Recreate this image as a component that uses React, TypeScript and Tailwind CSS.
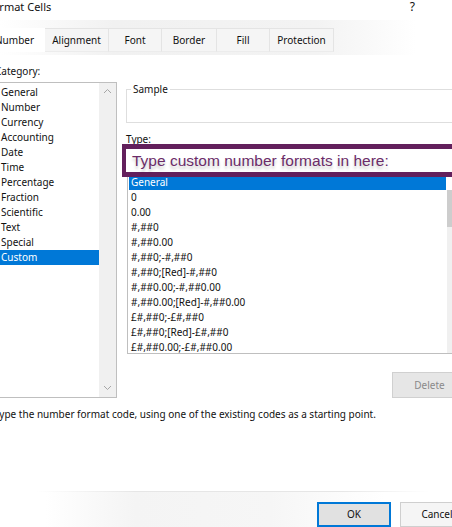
import React from 'react';

const categories = ['General', 'Number', 'Currency', 'Accounting', 'Date', 'Time', 'Percentage', 'Fraction', 'Scientific', 'Text', 'Special', 'Custom'];

const formats = [
    'General',
    '0',
    '0.00',
    '#,##0',
    '#,##0.00',
    '#,##0;-#,##0',
    '#,##0;[Red]-#,##0',
    '#,##0.00;-#,##0.00',
    '#,##0.00;[Red]-#,##0.00',
    '£#,##0;-£#,##0',
    '£#,##0;[Red]-£#,##0',
    '£#,##0.00;-£#,##0.00',
];

const tabs = [
    { label: 'Alignment', width: 'w-[64px]' },
    { label: 'Font', width: 'w-[53px]' },
    { label: 'Border', width: 'w-[55px]' },
    { label: 'Fill', width: 'w-[53px]' },
    { label: 'Protection', width: 'w-[64px]' },
];

const Chevron: React.FC<{ up?: boolean }> = ({ up }) => (
    <svg width="9" height="6" viewBox="0 0 9 6" className="text-[#a6a6a6]">
        <path d={up ? 'M1 5 L4.5 1.5 L8 5' : 'M1 1 L4.5 4.5 L8 1'} fill="none" stroke="currentColor" strokeWidth="1" />
    </svg>
);

const App: React.FC = () => {
    return (
        <div className="w-[452px] h-[527px] overflow-hidden bg-white text-[10px] text-[#111111] font-['Noto_Sans',sans-serif]">
            {/* title bar */}
            <div className="flex h-[13px] items-center justify-between pr-[37px]">
                <span className="ml-[-13px] text-[11px] leading-[13px] whitespace-nowrap">Format Cells</span>
                <span className="text-[12px] leading-[13px]">?</span>
            </div>

            {/* tabs */}
            <div className="mt-[7px] pt-[8px] pb-[3px] bg-[linear-gradient(to_right,#ffffff_0%,#f1f1f1_25%,#f3f3f3_70%,#ffffff_92%)]">
                <div className="flex h-[24px]">
                    <div className="ml-[-13px] w-[58px] pl-[8px] flex items-center bg-white whitespace-nowrap">Number</div>
                    {tabs.map((t) => (
                        <div
                            key={t.label}
                            className={`${t.width} flex items-center justify-center bg-[#f5f5f5] border-t border-r border-[#e4e4e4] border-b border-b-[#ececec]`}
                        >
                            {t.label}
                        </div>
                    ))}
                </div>
            </div>

            {/* body */}
            <div className="flex items-start">
                <div className="w-[117px] shrink-0 pt-[9px]">
                    <div className="ml-[-5px] h-[14px] leading-[14px]">Category:</div>
                    <div className="mt-[4px] ml-[-2px] h-[316px] border border-[#bfbfbf] flex">
                        <div className="flex-1 pt-[2px] pl-[1px]">
                            {categories.map((c) => (
                                <div
                                    key={c}
                                    className={`h-[15px] leading-[15px] pl-[1px] ${c === 'Custom' ? 'bg-[#0078d7] text-white' : ''}`}
                                >
                                    {c}
                                </div>
                            ))}
                        </div>
                        <div className="w-[17px] bg-[#f0f0f0] flex flex-col items-center justify-between pt-[5px] pb-[6px]">
                            <Chevron up />
                            <Chevron />
                        </div>
                    </div>
                </div>

                <div className="ml-[5px] w-[343px] shrink-0 pt-[27px]">
                    <fieldset className="ml-[4px] w-[330px] h-[41px] border border-[#dedede]">
                        <legend className="ml-[4px] px-[2px] leading-[14px]">Sample</legend>
                    </fieldset>

                    <div className="mt-[10px] ml-[4px] h-[12px] leading-[12px]">
                        <span className="underline">T</span>ype:
                    </div>

                    <div className="relative z-10 mt-[-1px] h-[33px] border-[5px] border-l-[4px] border-[#63205c] bg-white pl-[6px] flex items-center">
                        <span className="font-['Liberation_Sans',sans-serif] text-[15.5px] leading-[20px] text-[#6b2c69] whitespace-nowrap [text-shadow:0_3px_3px_rgba(0,0,0,0.22)]">
                            Type custom number formats in here:
                        </span>
                    </div>

                    <div className="mt-[-4px] ml-[5px] h-[181px] border border-[#bfbfbf] flex">
                        <div className="w-[319px] pt-[1px] px-[1px]">
                            {formats.map((f) => (
                                <div
                                    key={f}
                                    className={`h-[15px] leading-[15px] pl-[2px] whitespace-nowrap ${f === 'General' ? 'bg-[#0078d7] text-white' : ''}`}
                                >
                                    {f}
                                </div>
                            ))}
                        </div>
                        <div className="flex-1 flex flex-col bg-[#f0f0f0]">
                            <div className="h-[16px] bg-white" />
                            <div className="h-[37px] bg-[#cdcdcd]" />
                        </div>
                    </div>

                    <div className="mt-[18px] ml-[270px] w-[75px] h-[26px] border border-[#d0d0d0] bg-[#e6e6e6] text-[#8a8a8a] flex items-center justify-center">
                        Delete
                    </div>
                </div>
            </div>

            {/* description */}
            <div className="mt-[9px] ml-[-6px] h-[14px] leading-[14px] whitespace-nowrap">
                Type the number format code, using one of the existing codes as a starting point.
            </div>

            {/* footer */}
            <div className="mt-[70px] h-px bg-[linear-gradient(to_right,transparent_8%,#e6e6e6_30%,#e6e6e6_75%,transparent_95%)]" />
            <div className="h-[40px] pt-[10px] bg-[linear-gradient(to_right,#ffffff_10%,#f4f4f4_30%,#f6f6f6_60%,#ffffff_85%)]">
                <div className="flex gap-[9px] ml-[317px]">
                    <div className="w-[74px] h-[25px] shrink-0 border-2 border-[#0078d7] bg-[#e1e1e1] flex items-center justify-center">OK</div>
                    <div className="w-[74px] h-[25px] shrink-0 border border-[#cfcfcf] bg-[#f5f5f5] flex items-center justify-center">Cancel</div>
                </div>
            </div>
        </div>
    );
};

export default App;
